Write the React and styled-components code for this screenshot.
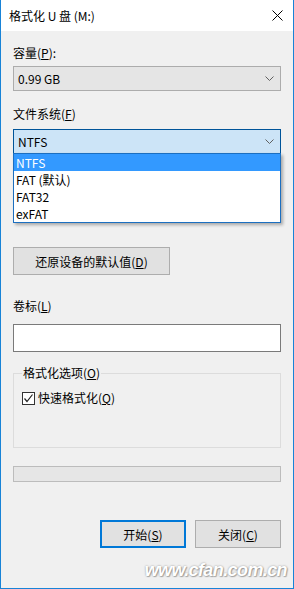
import React from "react";
import styled, { createGlobalStyle } from "styled-components";

const Global = createGlobalStyle`
  html, body { margin: 0; padding: 0; background: #ffffff; }
  * { box-sizing: border-box; }
  body { font-family: "Noto Sans CJK SC", "Noto Sans", sans-serif; font-size: 12px; color: #000; }
  u { text-decoration: underline; text-underline-offset: 1px; }
`;

const Window = styled.div`
  position: relative;
  width: 294px;
  height: 589px;
  display: flex;
  flex-direction: column;
  border: 1px solid #1883d7;
  border-top: none;
  overflow: hidden;
`;

const TitleBar = styled.div`
  height: 31px;
  flex: none;
  background: #ffffff;
  display: flex;
  align-items: center;
  justify-content: space-between;
  padding: 0 10px 0 8px;
  font-size: 12px;
  line-height: 16px;
`;

const Body = styled.div`
  flex: 1;
  background: #f0f0f0;
  padding: 14px 12px 0 12px;
  display: flex;
  flex-direction: column;
`;

const Label = styled.div`
  height: 16px;
  line-height: 16px;
  margin-top: ${(p) => p.$mt || 0}px;
  white-space: nowrap;
`;

const Combo = styled.div`
  height: 25px;
  margin-top: ${(p) => p.$mt || 0}px;
  display: flex;
  align-items: center;
  justify-content: space-between;
  padding: 0 6px 0 4px;
  background: ${(p) => (p.$focused ? "#cce4f7" : "#e5e5e5")};
  border: 1px solid ${(p) => (p.$focused ? "#005499" : "#acacac")};
  font-size: 12px;
`;

const ComboWrap = styled.div`
  position: relative;
  display: flex;
  flex-direction: column;
  margin-top: ${(p) => p.$mt || 0}px;
`;

const DropList = styled.ul`
  position: absolute;
  top: 24px;
  left: 0;
  right: 0;
  margin: 0;
  padding: 0;
  list-style: none;
  background: #ffffff;
  border: 1px solid #1c6fc0;
  box-shadow: 2px 2px 3px rgba(0, 0, 0, 0.3);
  z-index: 5;
`;

const DropItem = styled.li`
  height: 17px;
  line-height: 17px;
  padding-left: 2px;
  background: ${(p) => (p.$selected ? "#3399ff" : "transparent")};
  color: ${(p) => (p.$selected ? "#ffffff" : "#000000")};
`;

const Button = styled.button`
  font-family: inherit;
  font-size: 12px;
  color: #000;
  height: 28px;
  width: ${(p) => p.$w}px;
  margin-top: ${(p) => p.$mt || 0}px;
  background: #e1e1e1;
  border: ${(p) => (p.$primary ? "2px solid #0078d7" : "1px solid #adadad")};
  padding: 0;
  display: flex;
  align-items: center;
  justify-content: center;
  flex: none;
`;

const TextInput = styled.div`
  height: 28px;
  margin-top: 10px;
  background: #ffffff;
  border: 1px solid #7a7a7a;
`;

const Group = styled.fieldset`
  margin: 13px 0 0 0;
  padding: 0 0 0 8px;
  height: 83px;
  border: 1px solid #dcdcdc;
  display: flex;
  flex-direction: column;
`;

const Legend = styled.legend`
  padding: 0 1px;
  margin-left: 0;
  line-height: 16px;
  font-size: 12px;
`;

const CheckRow = styled.label`
  display: flex;
  align-items: center;
  gap: 3px;
  margin-top: 9px;
  line-height: 16px;
`;

const CheckBox = styled.span`
  width: 13px;
  height: 13px;
  border: 1px solid #333333;
  background: #ffffff;
  display: flex;
  align-items: center;
  justify-content: center;
`;

const Progress = styled.div`
  height: 16px;
  margin-top: 18px;
  background: #e6e6e6;
  border: 1px solid #bcbcbc;
`;

const ButtonRow = styled.div`
  display: flex;
  justify-content: flex-end;
  gap: 9px;
  margin-top: 38px;
`;

const Watermark = styled.div`
  position: absolute;
  right: 6px;
  bottom: 7px;
  font-family: "Liberation Sans", Arial, sans-serif;
  font-style: italic;
  font-weight: bold;
  font-size: 18px;
  letter-spacing: -0.6px;
  color: #ffffff;
  text-shadow: 0 0 2px rgba(0, 0, 0, 0.4), 1px 1px 1px rgba(0, 0, 0, 0.25);
`;

const Chevron = () => (
  <svg width="9" height="5" viewBox="0 0 9 5">
    <polyline points="0.5,0.5 4.5,4.5 8.5,0.5" fill="none" stroke="#606060" strokeWidth="1" />
  </svg>
);

const CloseIcon = () => (
  <svg width="11" height="11" viewBox="0 0 11 11">
    <path d="M0.5 0.5 L10.5 10.5 M10.5 0.5 L0.5 10.5" stroke="#000" strokeWidth="1" />
  </svg>
);

const Check = () => (
  <svg width="11" height="11" viewBox="0 0 11 11">
    <polyline points="1.5,5.5 4,8.5 9.5,1.5" fill="none" stroke="#222" strokeWidth="1.2" />
  </svg>
);

export default function App() {
  const fsOptions = ["NTFS", "FAT (默认)", "FAT32", "exFAT"];
  return (
    <>
      <Global />
      <Window>
        <TitleBar>
          <span>格式化 U 盘 (M:)</span>
          <CloseIcon />
        </TitleBar>
        <Body>
          <Label>容量(<u>P</u>):</Label>
          <Combo $mt={5}>
            <span>0.99 GB</span>
            <Chevron />
          </Combo>
          <Label $mt={15}>文件系统(<u>F</u>)</Label>
          <ComboWrap $mt={7}>
            <Combo $focused>
              <span>NTFS</span>
              <Chevron />
            </Combo>
            <DropList>
              {fsOptions.map((o, i) => (
                <DropItem key={o} $selected={i === 0}>{o}</DropItem>
              ))}
            </DropList>
          </ComboWrap>
          <Button $w={157} $mt={93}>还原设备的默认值(<u>D</u>)</Button>
          <Label $mt={23}>卷标(<u>L</u>)</Label>
          <TextInput />
          <Group>
            <Legend>格式化选项(<u>O</u>)</Legend>
            <CheckRow>
              <CheckBox><Check /></CheckBox>
              <span>快速格式化(<u>Q</u>)</span>
            </CheckRow>
          </Group>
          <Progress />
          <ButtonRow>
            <Button $w={86} $primary>开始(<u>S</u>)</Button>
            <Button $w={86}>关闭(<u>C</u>)</Button>
          </ButtonRow>
        </Body>
        <Watermark>www.cfan.com.cn</Watermark>
      </Window>
    </>
  );
}
